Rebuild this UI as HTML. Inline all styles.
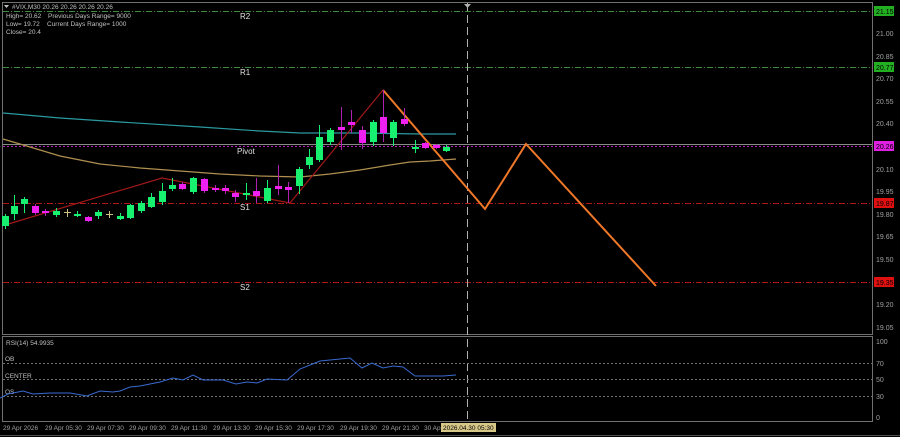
<!DOCTYPE html>
<html><head><meta charset="utf-8"><style>
html,body{margin:0;padding:0;background:#000;width:900px;height:437px;overflow:hidden}
svg{display:block;font-family:"Liberation Sans",sans-serif}
</style></head><body>
<svg width="900" height="437" viewBox="0 0 900 437" xmlns="http://www.w3.org/2000/svg">
<rect width="900" height="437" fill="#000"/>
<!-- frames -->
<rect x="2.5" y="2.5" width="870" height="332" fill="none" stroke="#707070" stroke-width="1"/>
<rect x="2.5" y="336.5" width="870" height="85" fill="none" stroke="#707070" stroke-width="1"/>
<line x1="0" y1="435.5" x2="900" y2="435.5" stroke="#505050"/>
<!-- pivot levels -->
<g stroke-width="1" fill="none">
<line x1="3" y1="11.5" x2="872" y2="11.5" stroke="#3e8a3e" stroke-dasharray="6,2,1,2"/>
<line x1="3" y1="67.5" x2="872" y2="67.5" stroke="#3e8a3e" stroke-dasharray="6,2,1,2"/>
<line x1="3" y1="144.5" x2="872" y2="144.5" stroke="#8a8a8a"/>
<line x1="3" y1="146.5" x2="872" y2="146.5" stroke="#b020b0" stroke-dasharray="2,2"/>
<line x1="3" y1="203.5" x2="872" y2="203.5" stroke="#b01818" stroke-dasharray="6,2,1,2"/>
<line x1="3" y1="282.5" x2="872" y2="282.5" stroke="#b01818" stroke-dasharray="6,2,1,2"/>
<line x1="467.5" y1="3" x2="467.5" y2="422" stroke="#b0b0b0" stroke-dasharray="8,4"/>
</g>
<polygon points="464,4 471,4 467.5,8" fill="#b0b0b0"/>
<!-- MAs -->
<polyline fill="none" stroke="#2a9aa0" stroke-width="1.2" points="3,113 60,118 120,122 200,127 260,131 300,133 360,133 420,134 456,134"/>
<polyline fill="none" stroke="#b09050" stroke-width="1.2" points="3,139 30,147 60,156 100,164 140,168 180,171 220,174 260,176 300,177 330,174 360,170 390,165 410,162 430,161 456,159"/>
<!-- red zigzag -->
<polyline fill="none" stroke="#a01818" stroke-width="1.2" points="5,225 162,178 290,203 383,90"/>
<!-- orange projection -->
<polyline fill="none" stroke="#f07828" stroke-width="2" points="383,90 485,209 526,144 656,286"/>
<!-- candles -->
<g id="c"></g>
<!-- labels -->
<g fill="#e0e0e0" font-size="8">
<text x="240" y="19">R2</text><text x="240" y="75">R1</text><text x="237" y="154">Pivot</text>
<text x="240" y="210">S1</text><text x="240" y="290">S2</text>
</g>
<g fill="#c0c0c0" font-size="6.5">
<polygon points="4,5 9,5 6.5,8" fill="#c0c0c0"/>
<text x="12" y="9">#VIX,M30  20.26 20.26 20.26 20.26</text>
<text x="6" y="18">High= 20.62</text><text x="48" y="18">Previous Days Range= 9000</text>
<text x="6" y="26">Low= 19.72</text><text x="47" y="26">Current Days Range= 1000</text>
<text x="6" y="34">Close= 20.4</text>
</g>
<!-- price axis -->
<g fill="#a0a0a0" font-size="7">
<text x="876" y="36">21.00</text><text x="876" y="59">20.85</text><text x="876" y="81">20.70</text>
<text x="876" y="104">20.55</text><text x="876" y="126">20.40</text><text x="876" y="172">20.10</text>
<text x="876" y="194">19.95</text><text x="876" y="217">19.80</text><text x="876" y="239">19.65</text>
<text x="876" y="262">19.50</text><text x="876" y="307">19.20</text><text x="876" y="330">19.05</text>
<text x="876" y="344">100</text><text x="876" y="366">70</text><text x="876" y="382">50</text>
<text x="876" y="399">30</text><text x="876" y="420">0</text>
</g>
<rect x="874" y="6" width="20" height="10" fill="#22b022"/><text x="876" y="14" font-size="7" fill="#000">21.15</text>
<rect x="874" y="62" width="20" height="10" fill="#22b022"/><text x="876" y="70" font-size="7" fill="#000">20.77</text>
<rect x="874" y="141" width="20" height="10" fill="#e020e0"/><text x="876" y="149" font-size="7" fill="#000">20.26</text>
<rect x="874" y="198" width="20" height="10" fill="#e01010"/><text x="876" y="206" font-size="7" fill="#000">19.87</text>
<rect x="874" y="277" width="20" height="10" fill="#e01010"/><text x="876" y="285" font-size="7" fill="#000">19.35</text>
<!-- RSI -->
<g stroke="#707070" stroke-dasharray="2,2"><line x1="3" y1="363.5" x2="872" y2="363.5"/><line x1="3" y1="379.5" x2="872" y2="379.5"/><line x1="3" y1="396.5" x2="872" y2="396.5"/></g>
<g fill="#c0c0c0" font-size="6.5"><text x="6" y="345">RSI(14) 54.9935</text><text x="5" y="361">OB</text><text x="5" y="378">CENTER</text><text x="5" y="394">OS</text></g>
<polyline fill="none" stroke="#3a6ad0" stroke-width="1" points="0,398 8,394 23,391 33,394 50,393 70,393 87,396 100,391 113,392 120,391 130,387 140,386 160,382 173,378 183,380 193,375 203,380 223,380 236,384 247,382 257,383 267,379 287,380 300,369 320,361 330,360 350,358 362,368 372,363 383,368 393,366 403,367 415,376 427,376 443,376 456,375"/>
<!-- time axis -->
<g fill="#a0a0a0" font-size="6.5">
<text x="3" y="430">29 Apr 2026</text><text x="45" y="430">29 Apr 05:30</text><text x="87" y="430">29 Apr 07:30</text>
<text x="129" y="430">29 Apr 09:30</text><text x="171" y="430">29 Apr 11:30</text><text x="213" y="430">29 Apr 13:30</text>
<text x="255" y="430">29 Apr 15:30</text><text x="297" y="430">29 Apr 17:30</text><text x="340" y="430">29 Apr 19:30</text>
<text x="382" y="430">29 Apr 21:30</text><text x="424" y="430">30 Ap</text>
</g>
<rect x="441" y="423" width="55" height="9" fill="#d8c888"/><text x="443" y="430" font-size="6.5" fill="#000">2026.04.30 05:30</text>
<g id="cd"></g>
</svg>
<script>
var G="#18f070",M="#f020f0",T="#d0c080";
var d=[[5,216,226,G,214,229],[14,206,214,G,195,220],[24,199,204,G,197,213],[35,206,213,M,204,215],[45,211,213,M,209,216],[56,211,215,G,208,217],[67,212,213,T,209,217],[77,214,216,G,211,217],[88,217,221,M,216,222],[98,212,216,G,210,219],[109,214,215,T,211,218],[120,216,219,G,213,220],[130,205,218,G,204,219],[141,203,211,G,201,213],[151,197,207,G,193,208],[162,191,202,G,183,205],[172,185,189,G,178,191],[182,184,189,M,182,190],[193,178,192,G,177,194],[204,179,191,M,178,193],[215,188,190,M,185,192],[225,188,191,M,185,194],[235,193,197,M,190,202],[246,193,195,G,183,200],[256,191,196,M,178,203],[267,188,201,G,180,203],[278,186,189,M,165,195],[288,187,190,M,182,203],[299,169,186,G,167,194],[309,157,165,G,149,169],[319,137,160,G,125,162],[330,130,142,G,128,145],[341,127,130,M,107,150],[351,122,125,M,110,133],[362,130,143,M,126,149],[373,122,142,G,120,146],[383,117,133,M,90,142],[393,122,138,G,120,146],[404,119,124,M,108,126],[415,147,149,G,140,153],[425,143,148,M,142,149],[436,145,148,M,144,149],[446,147,151,G,145,152]];
var s="",ns="http://www.w3.org/2000/svg",g=document.getElementById("c");
d.forEach(function(c){var l=document.createElementNS(ns,"line");l.setAttribute("x1",c[0]+.5);l.setAttribute("x2",c[0]+.5);l.setAttribute("y1",c[4]);l.setAttribute("y2",c[5]);l.setAttribute("stroke",c[3]==M?"#b020b0":c[3]);g.appendChild(l);
var r=document.createElementNS(ns,"rect");r.setAttribute("x",c[0]-3);r.setAttribute("y",c[1]);r.setAttribute("width",7);r.setAttribute("height",Math.max(1,c[2]-c[1]));r.setAttribute("fill",c[3]);g.appendChild(r);});
</script>
</body></html>
